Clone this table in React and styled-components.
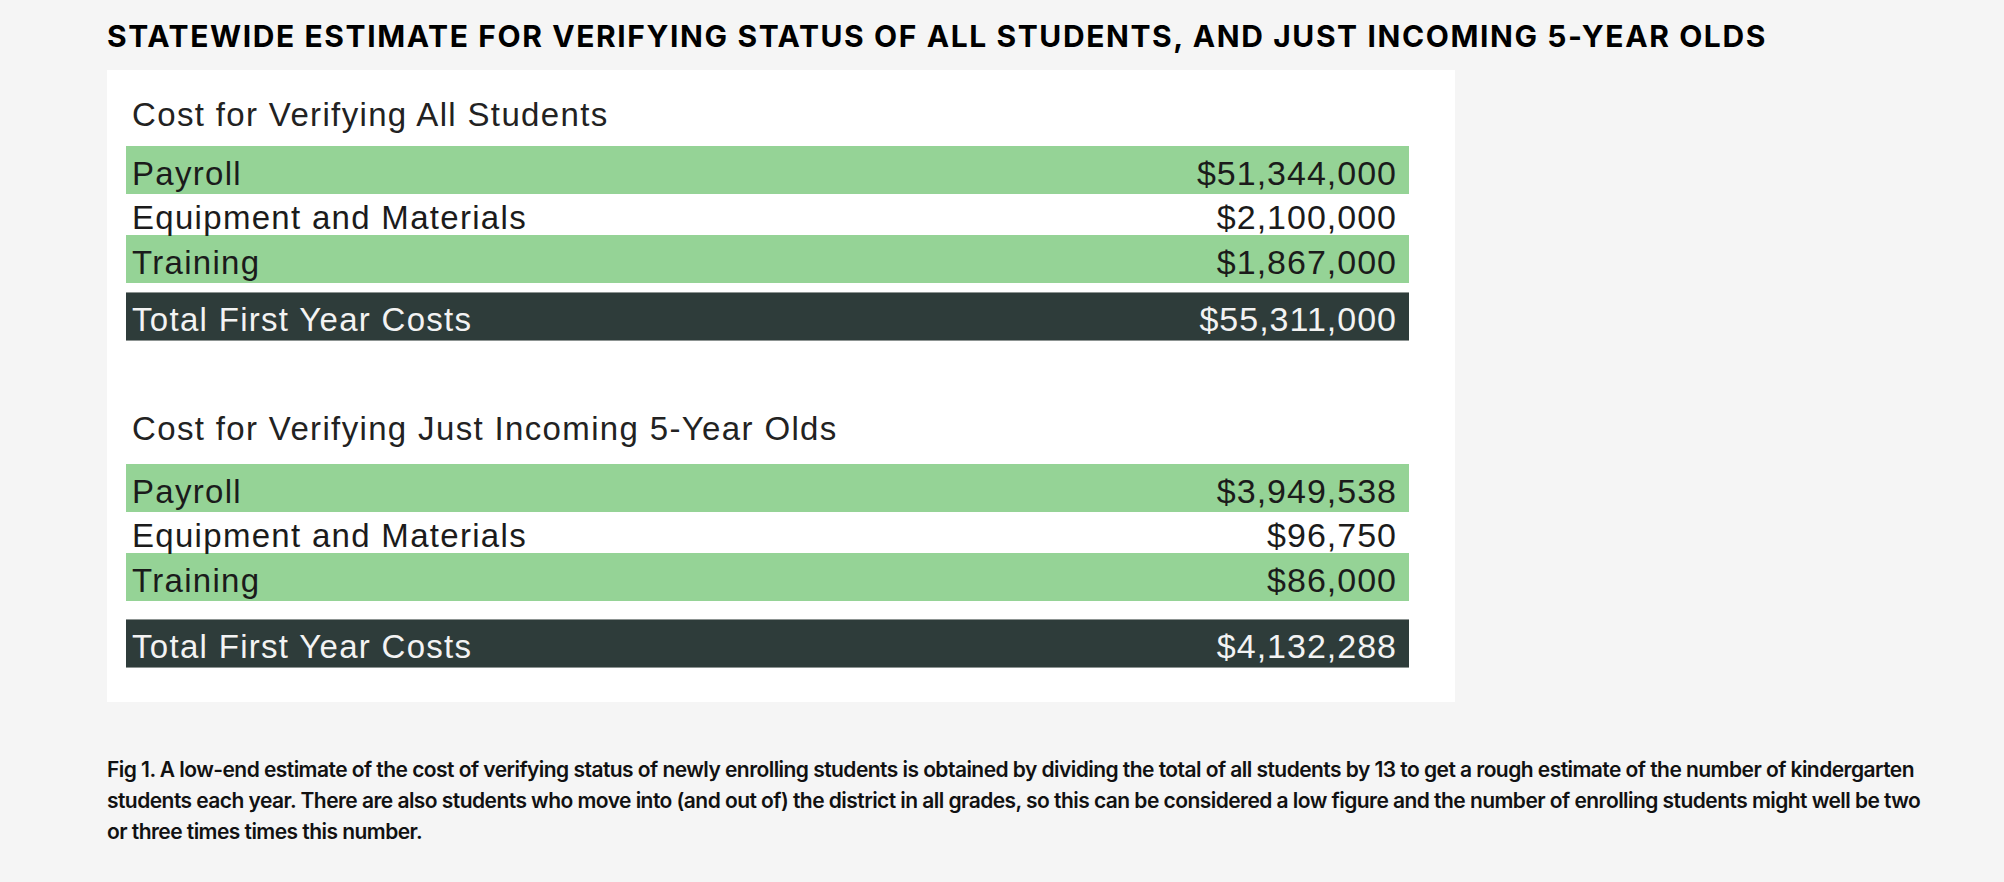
import React from 'react';
import styled, { createGlobalStyle } from 'styled-components';

const GlobalStyle = createGlobalStyle`
  html, body {
    margin: 0;
    padding: 0;
    background: #f5f5f5;
  }
`;

const green = '#95d396';
const dark = '#2e3c3a';

const sections = [
  {
    title: 'Cost for Verifying All Students',
    headGap: 15,
    totalGap: 9,
    rows: [
      { label: 'Payroll', value: '$51,344,000' },
      { label: 'Equipment and Materials', value: '$2,100,000' },
      { label: 'Training', value: '$1,867,000' },
    ],
    total: '$55,311,000',
  },
  {
    title: 'Cost for Verifying Just Incoming 5-Year Olds',
    headGap: 19,
    totalGap: 18,
    rows: [
      { label: 'Payroll', value: '$3,949,538' },
      { label: 'Equipment and Materials', value: '$96,750' },
      { label: 'Training', value: '$86,000' },
    ],
    total: '$4,132,288',
  },
];

const Page = styled.div`
  padding: 21px 0 40px 107px;
  font-family: Inter, "Liberation Sans", sans-serif;
`;

const Title = styled.h2`
  margin: 0;
  font-size: 30px;
  line-height: 30px;
  font-weight: 700;
  color: #000;
  letter-spacing: 1.6px;
`;

const Card = styled.div`
  margin-top: 19px;
  width: 1348px;
  box-sizing: border-box;
  background: #fff;
  padding: 28px 46px 34px 19px;
`;

const Section = styled.div`
  & + & {
    margin-top: 71px;
  }
`;

const SectionTitle = styled.div`
  font-family: "Liberation Sans", Arial, sans-serif;
  font-size: 33px;
  line-height: 33px;
  letter-spacing: 1.35px;
  color: #222;
  padding-left: 6px;
  margin-bottom: ${(props) => props.$gap}px;
`;

const Row = styled.div`
  display: flex;
  justify-content: space-between;
  align-items: flex-end;
  box-sizing: border-box;
  height: ${(props) => (props.$tone === 'plain' ? 41 : 48)}px;
  padding: 0 12px ${(props) => (props.$tone === 'plain' ? 1 : 4)}px 6px;
  background: ${(props) =>
    props.$tone === 'green' ? green : props.$tone === 'dark' ? dark : '#fff'};
  color: ${(props) => (props.$tone === 'dark' ? '#f3f3f3' : '#1b1b1b')};
`;

const TotalRow = styled(Row)`
  margin-top: ${(props) => props.$gap}px;
  height: 49px;
  border-top: 1px solid #8d9492;
  border-bottom: 1px solid #8d9492;
`;

const Label = styled.span`
  font-family: "Liberation Sans", Arial, sans-serif;
  font-size: 33px;
  line-height: 33px;
  letter-spacing: 1.3px;
`;

const Amount = styled.span`
  font-family: "Liberation Sans", Arial, sans-serif;
  font-size: 34px;
  line-height: 34px;
  letter-spacing: 1px;
`;

const Caption = styled.p`
  margin: 52px 0 0;
  max-width: 1822px;
  font-size: 21px;
  line-height: 31px;
  font-weight: 600;
  letter-spacing: -0.55px;
  color: #111;
`;

export default function App() {
  return (
    <Page>
      <GlobalStyle />
      <Title>
        STATEWIDE ESTIMATE FOR VERIFYING STATUS OF ALL STUDENTS, AND JUST INCOMING 5-YEAR OLDS
      </Title>
      <Card>
        {sections.map((section) => (
          <Section key={section.title}>
            <SectionTitle $gap={section.headGap}>{section.title}</SectionTitle>
            {section.rows.map((row, index) => (
              <Row key={row.label} $tone={index % 2 === 0 ? 'green' : 'plain'}>
                <Label>{row.label}</Label>
                <Amount>{row.value}</Amount>
              </Row>
            ))}
            <TotalRow $tone="dark" $gap={section.totalGap}>
              <Label>Total First Year Costs</Label>
              <Amount>{section.total}</Amount>
            </TotalRow>
          </Section>
        ))}
      </Card>
      <Caption>
        Fig 1. A low-end estimate of the cost of verifying status of newly enrolling students is
        obtained by dividing the total of all students by 13 to get a rough estimate of the number
        of kindergarten students each year. There are also students who move into (and out of) the
        district in all grades, so this can be considered a low figure and the number of enrolling
        students might well be two or three times times this number.
      </Caption>
    </Page>
  );
}
